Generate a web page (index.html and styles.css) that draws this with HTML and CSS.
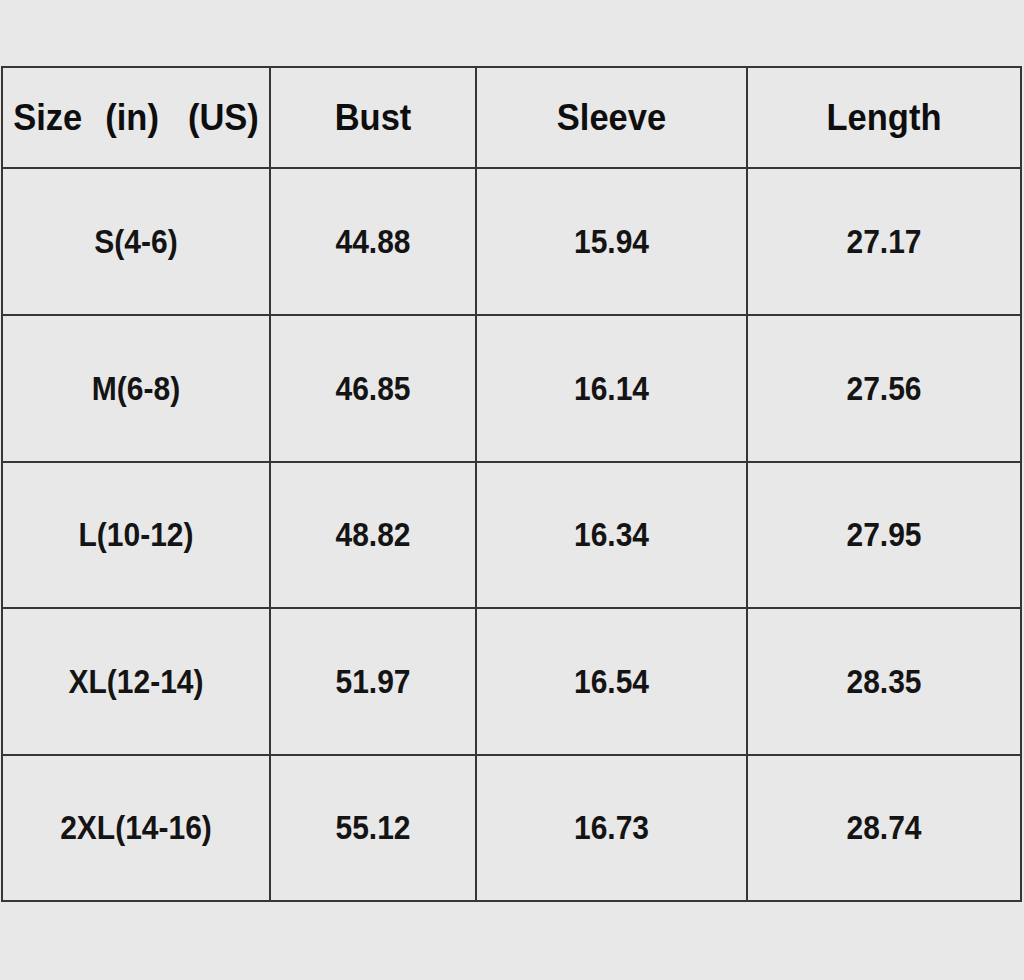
FILE: index.html
```html
<!DOCTYPE html>
<html>
<head>
<meta charset="utf-8">
<link rel="stylesheet" href="styles.css">
</head>
<body>
<div class="chart">
  <div class="cell head"><span class="t">Size<span class="w1">(in)</span><span class="w2">(US)</span></span></div>
  <div class="cell head"><span class="t">Bust</span></div>
  <div class="cell head"><span class="t">Sleeve</span></div>
  <div class="cell head"><span class="t">Length</span></div>

  <div class="cell"><span class="t">S(4-6)</span></div>
  <div class="cell"><span class="t">44.88</span></div>
  <div class="cell"><span class="t">15.94</span></div>
  <div class="cell"><span class="t">27.17</span></div>

  <div class="cell"><span class="t">M(6-8)</span></div>
  <div class="cell"><span class="t">46.85</span></div>
  <div class="cell"><span class="t">16.14</span></div>
  <div class="cell"><span class="t">27.56</span></div>

  <div class="cell"><span class="t">L(10-12)</span></div>
  <div class="cell"><span class="t">48.82</span></div>
  <div class="cell"><span class="t">16.34</span></div>
  <div class="cell"><span class="t">27.95</span></div>

  <div class="cell"><span class="t">XL(12-14)</span></div>
  <div class="cell"><span class="t">51.97</span></div>
  <div class="cell"><span class="t">16.54</span></div>
  <div class="cell"><span class="t">28.35</span></div>

  <div class="cell"><span class="t">2XL(14-16)</span></div>
  <div class="cell"><span class="t">55.12</span></div>
  <div class="cell"><span class="t">16.73</span></div>
  <div class="cell"><span class="t">28.74</span></div>
</div>
</body>
</html>
```
FILE: styles.css
```css
html, body {
  margin: 0;
  padding: 0;
  background: #e8e8e8;
}
body {
  width: 1024px;
  height: 980px;
  overflow: hidden;
  font-family: "Liberation Sans", Arial, sans-serif;
}
.chart {
  margin: 66px 0 0 1px;
  width: 1021px;
  box-sizing: border-box;
  padding: 2px;
  background: #363636;
  display: grid;
  grid-template-columns: 266px 204px 269px 272px;
  grid-template-rows: 99px 145px 145px 144px 145px 144px;
  gap: 2px;
}
.cell {
  background: #e8e8e8;
  display: flex;
  align-items: center;
  justify-content: center;
  font-weight: bold;
  font-size: 30px;
  color: #141414;
}
.t {
  display: inline-block;
  transform: scaleY(1.08);
}
.head {
  font-size: 34.5px;
  color: #0e0e0e;
}
.head .w1 { margin-left: 23px; }
.head .w2 { margin-left: 29px; }
```
